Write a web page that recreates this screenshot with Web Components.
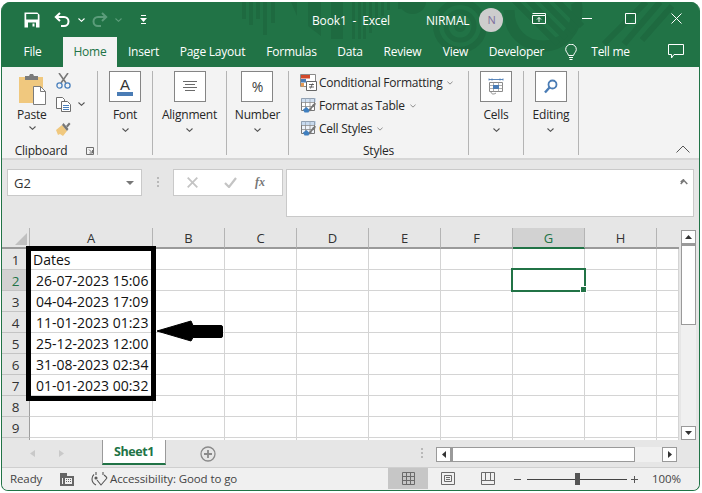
<!DOCTYPE html>
<html><head><meta charset="utf-8">
<style>
html,body{margin:0;padding:0;background:#fff;overflow:hidden}
body{font-family:"Open Sans","Noto Sans",sans-serif;width:702px;height:493px}
</style></head><body>
<xl-window>
  <xl-title></xl-title>
  <xl-tabs></xl-tabs>
  <xl-ribbon></xl-ribbon>
  <xl-formula></xl-formula>
  <xl-sheet></xl-sheet>
  <xl-sheetbar></xl-sheetbar>
  <xl-status></xl-status>
</xl-window>
<script>
const def=(name,html,init)=>customElements.define(name,class extends HTMLElement{
  constructor(){super();const r=this.attachShadow({mode:'open'});r.innerHTML=typeof html==='function'?html(this):html;}
  connectedCallback(){if(init&&!this._i){this._i=1;init(this.shadowRoot,this);}}
});
const G='#217346',FONT='"Open Sans","Noto Sans",sans-serif';
const chev=(c='#666',w=7)=>`<svg width="${w}" height="4" viewBox="0 0 7 4" fill="none"><path d="M.5.5 3.5 3.3 6.5.5" stroke="${c}" stroke-width="1.1"/></svg>`;

def('xl-window',`<style>
:host{display:flex;flex-direction:column;box-sizing:border-box;width:699px;height:489px;margin:2px 2px 0 1px;
border:1px solid ${G};border-top:0;border-radius:9px 9px 7px 7px;overflow:hidden;background:#e6e6e6;position:relative}
</style><slot></slot>`);

def('xl-title',`<style>
:host{display:flex;align-items:center;height:35px;flex:none;background:${G};color:#fff;font:12px ${FONT};position:relative;letter-spacing:-.15px}
.bg{position:absolute;left:0;top:-2px}
.i{position:relative;display:flex;flex:none}
.t{position:relative;white-space:pre;flex:none;padding-top:1px}
.av{position:relative;width:24px;height:24px;border-radius:50%;background:#cdcdcd;color:#7d6f9c;font-size:11px;display:flex;align-items:center;justify-content:center;flex:none;margin-left:10px;font-weight:400}
</style>
<svg class="bg" width="699" height="67" viewBox="0 0 699 67" fill="#1e6a40">
<path d="M0 0h699v67H0z" fill="${G}"/>
<path d="M240 2h4v17h-4zM247 2h4v23h-4zM254 2h4v17h-4zM261 2h4v33h-4zM269 2h4v21h-4zM289 2h6v14zM306 2h13v34l-13-10zM329 2h12v37h-12zM350 2h3v37h-3zM356 2h3v37h-3zM361 2h3v37h-3zM367 2h3v31h-3zM373 2h3v22h-3zM379 2h3v14h-3zM385 2h3v8h-3zM396 2h3v7h-3z"/>
<path d="M397 2h27c0 6-6 12-13.500 12S397 8 397 2z"/>
<g fill="none" stroke="#1e6a40"><circle cx="458" cy="26" r="14" stroke-width="5"/><circle cx="458" cy="26" r="4" stroke-width="4"/><circle cx="458" cy="26" r="24" stroke-width="6"/>
<path d="M507 10c0 22 15 36 34 36s34-15 34-36c0-3 0-6-1-8" stroke-width="11" stroke-linecap="butt"/></g>
<g stroke="#1e6a40" stroke-width="6"><path d="M508-4 556 44M522-4 564 38M536-4 572 32M550-4 580 26M644 2 602 44M658 2 622 44M670 6 640 40"/></g>
</svg>
<span class="i" style="margin-left:22px"><svg width="16" height="16" viewBox="0 0 16 16"><path fill="#fff" fill-rule="evenodd" d="M.5.500h12.800l2.200 2.200V15.500H.5zM2.200 2v5.500h11.600V2zM4 10.500v5h8v-5zM8.500 11.500h2v3h-2z"/></svg></span>
<span class="i" style="margin-left:14px"><svg width="16" height="15" viewBox="0 0 16 15" fill="none" stroke="#fff" stroke-width="2"><path d="M6 1 1.800 5 6 9"/><path d="M2.500 5H10a4.500 4.500 0 0 1 0 9H7"/></svg></span>
<span class="i" style="margin-left:8px">${chev('#fff')}</span>
<span class="i" style="margin-left:7px"><svg width="16" height="15" viewBox="0 0 16 15" fill="none" stroke="#5b9c7a" stroke-width="2"><path d="M10 1l4.200 4L10 9"/><path d="M13.500 5H6a4.500 4.500 0 0 0 0 9h3"/></svg></span>
<span class="i" style="margin-left:7px">${chev('#5b9c7a')}</span>
<span class="i" style="margin-left:18px"><svg width="7" height="9" viewBox="0 0 7 9" fill="#fff"><path d="M1 0h5v1H1zM0 3h7L3.500 7z"/><path d="M1 8h5v1H1z"/></svg></span>
<span class="t" style="margin-left:165px">Book1  -  Excel</span>
<span class="t" style="margin-left:36px">NIRMAL</span>
<span class="av">N</span>
<span class="i" style="margin-left:29px;margin-top:-3px"><svg width="14" height="11" viewBox="0 0 14 11" fill="none" stroke="#fff"><path d="M.5 2.500h13v8H.5z M.5.500h13v2"/><path d="M7 9V4.500M5 6.500l2-2 2 2"/></svg></span>
<span class="i" style="margin-left:36px;margin-top:-3px"><svg width="10" height="1" viewBox="0 0 10 1"><path d="M0 0h10v1H0z" fill="#fff"/></svg></span>
<span class="i" style="margin-left:33px;margin-top:-3px"><svg width="11" height="11" viewBox="0 0 11 11" fill="none" stroke="#fff"><path d="M.5.500h10v10H.5z"/></svg></span>
<span class="i" style="margin-left:35px;margin-top:-3px"><svg width="11" height="11" viewBox="0 0 11 11" fill="none" stroke="#fff"><path d="M.5.500l10 10M10.500.500l-10 10"/></svg></span>
`);

def('xl-tabs',`<style>
:host{display:flex;height:30px;flex:none;color:#fff;font:12px ${FONT};position:relative;letter-spacing:-.22px;align-items:stretch}
span{display:flex;align-items:center;justify-content:center;flex:none;padding-bottom:2px;box-sizing:border-box;position:relative}
.on{background:#f3f3f3;color:${G};padding-bottom:2px}
svg{position:relative}
</style>
<span style="width:61px">File</span><span class="on" style="width:54px">Home</span>
<span style="width:53px">Insert</span><span style="width:85px">Page Layout</span><span style="width:73px">Formulas</span>
<span style="width:44px">Data</span><span style="width:61px">Review</span><span style="width:45px">View</span><span style="width:77px">Developer</span>
<span style="width:10px"></span>
<svg style="margin-top:7px" width="12" height="17" viewBox="0 0 12 17" fill="none" stroke="#fff"><path d="M3.500 11.500C3 9 .7 8 .7 5.500a5.300 5.300 0 0 1 10.600 0C11.300 8 9 9 8.500 11.500z"/><path d="M4 13.500h4M4.500 15.500h3"/></svg>
<span style="width:14px"></span><span style="width:39px;letter-spacing:-.3px">Tell me</span>
<span style="width:38px"></span>
<svg style="margin-top:7px" width="16" height="15" viewBox="0 0 16 15" fill="none" stroke="#fff"><path d="M.5.500h15v10H6L3.500 14v-3.500H.5z"/></svg>
`);

def('xl-rgroup',`<style>
:host{display:flex;flex:none;box-sizing:border-box;height:84px;border-right:1px solid #b4b4b4;position:relative;justify-content:center;margin-right:0}
</style><slot></slot>`);

def('xl-bigbtn',(h)=>`<style>
:host{display:flex;flex-direction:column;align-items:center;font:12px ${FONT};color:#262626;letter-spacing:-.2px}
.b{box-sizing:border-box;width:32px;height:31px;border:1px solid #858585;background:#fff;display:flex;align-items:center;justify-content:center}
.l{margin-top:4px;height:17px;line-height:17px;white-space:nowrap}
.c{margin-top:5px;display:flex}
</style><div class="b"><slot></slot></div><div class="l">${h.getAttribute('label')}</div><div class="c">${chev('#555')}</div>`);

const tbl=(a,b,c)=>`<svg width="17" height="17" viewBox="0 0 17 17"><path d="M1.500 1.500h13v12h-13z" fill="${c}" stroke="#777"/><path d="M1.500 5.500h13M1.500 9.500h13M5.500 1.500v12M10 1.500v12" stroke="#8a8a8a" stroke-width=".8"/><path d="M1 1h15v4H1z" fill="${a}" opacity=".55"/><path d="M6 15l5-5 2-3 3-1-1 3-3 2-1 3z" fill="#777"/><path d="M3 12.500l3.500-2.500 3 3-1 2.500H4.500z" fill="#3f7fbf"/></svg>`;

def('xl-style-row',(h)=>`<style>
:host{display:flex;flex:none;align-items:center;height:23px;font:12px ${FONT};color:#262626;white-space:nowrap;letter-spacing:-.24px}
.t{margin-left:2px;margin-right:5px;margin-top:0}
.i{display:flex;margin-left:0}
</style><span class="i"><slot></slot></span><span class="t">${h.getAttribute('label')}</span>${chev('#888',6)}`);

def('xl-ribbon',`<style>
:host{display:flex;height:93px;flex:none;box-sizing:border-box;background:#f3f3f3;border-bottom:2px solid #d6d6d6;padding-top:4px;position:relative;font:12px ${FONT};color:#262626;letter-spacing:-.2px}
.cb{display:grid;grid-template-columns:46px 26px 14px;grid-template-rows:24px 23px 25px 12px;width:95px;box-sizing:border-box;padding-left:16px}
.paste{grid-row:1/4;display:flex;flex-direction:column;align-items:flex-start;width:30px;padding-top:3px}
.paste span{margin-top:0;margin-left:-1px;height:17px;line-height:17px}
.paste .ch{display:flex;margin-top:3px;margin-left:11px}
.gl{text-align:center}
.cell{display:flex;align-items:center}
.styles{display:flex;flex-direction:column;padding-left:11px;width:179px;box-sizing:border-box;position:relative}
.lab{height:15px;line-height:15px;text-align:center;margin:3px 0 0 -11px}
.coll{position:absolute;right:9px;bottom:5px}
</style>
<xl-rgroup style="width:96px;justify-content:flex-start">
 <div class="cb">
  <div class="paste">
   <svg width="30" height="32" viewBox="0 0 30 32"><path d="M1 3h24v26H1z" fill="#f0c87e"/><path d="M7 4V2h4l1-2h3l1 2h4v4H7z" fill="#7b7b7b"/><path d="M15.500 12.500h7l5 5v13h-12z" fill="#fff" stroke="#7b7b7b"/><path d="M22.500 12.500v5h5" fill="none" stroke="#7b7b7b"/></svg>
   <span>Paste</span>
   <div class="ch">${chev('#555')}</div>
  </div>
  <div class="cell" style="margin-left:-8px;margin-top:-5px"><svg width="15" height="16" viewBox="0 0 15 16" fill="none"><path d="M3 0l7 10M12 0 5 10" stroke="#7a7a7a" stroke-width="1.600"/><circle cx="3.500" cy="12.500" r="2.600" stroke="#4a80bd" stroke-width="1.300"/><circle cx="11.500" cy="12.500" r="2.600" stroke="#4a80bd" stroke-width="1.300"/></svg></div>
  <div></div>
  <div class="cell" style="margin-left:-8px;margin-top:-5px"><svg width="15" height="15" viewBox="0 0 15 15" fill="none" stroke="#6f6f6f"><path d="M.5.500h6l2 2v9h-8z" fill="#fff"/><path d="M5.500 4.500h6l3 3v7h-9z" fill="#fff"/><path d="M7 8.500h6M7 10.500h6M7 12.500h6" stroke="#4a80bd"/></svg></div>
  <div class="cell" style="margin-left:-12px;margin-top:-5px">${chev('#555')}</div>
  <div class="cell" style="margin-left:-9px;margin-top:-3px"><svg width="16" height="15" viewBox="0 0 16 15"><path d="M1 8 7 3l5 6-4 5-3-2-2 1z" fill="#f0c87e"/><path d="M7 3l5 6 1.500-2-5-6z" fill="#777"/><path d="M11 4l3-3.500 1.500 1.500-3 3.500z" fill="#777"/></svg></div>
  <div></div>
  <div class="gl" style="grid-column:1/3;margin-left:-16px;width:78px;height:16px;line-height:16px">Clipboard</div>
  <div class="cell" style="margin-left:-4px;margin-top:4px"><svg width="9" height="8" viewBox="0 0 9 8" fill="none" stroke="#6f6f6f"><path d="M.5 7.500v-7h7v7z"/><path d="M3 2.500l3 3M6.500 3v3H3.500"/></svg></div>
 </div>
</xl-rgroup>
<xl-rgroup style="width:55px"><xl-bigbtn label="Font"><svg width="18" height="20" viewBox="0 0 18 20"><text x="9" y="13" text-anchor="middle" font-family="Liberation Sans" font-size="15" fill="#333">A</text><path d="M1 15h16v4H1z" fill="#4a7cb5"/></svg></xl-bigbtn></xl-rgroup>
<xl-rgroup style="width:74px"><xl-bigbtn label="Alignment"><svg width="14" height="11" viewBox="0 0 14 11" stroke="#6a6a6a"><path d="M0 .5h14M2 3.500h10M0 6.500h14M2 9.500h10"/></svg></xl-bigbtn></xl-rgroup>
<xl-rgroup style="width:62px"><xl-bigbtn label="Number"><span style="font:14px 'Open Sans';color:#404040">%</span></xl-bigbtn></xl-rgroup>
<xl-rgroup style="width:180px">
 <div class="styles">
  <xl-style-row label="Conditional Formatting"><svg width="17" height="17" viewBox="0 0 17 17"><path d="M.5.500h15v12H.5z" fill="#fff" stroke="#8a8a8a"/><path d="M1 1h9v3.500H1z" fill="#d2492a"/><path d="M1 5h5v3.500H1z" fill="#4a7cb5"/><path d="M1 9h3v3.500H1z" fill="#e69b55"/><path d="M6.500 7.500h10v9h-10z" fill="#fff" stroke="#666"/><path d="M9 10.500h5M9 13h5M12.500 9.500l-2 5" stroke="#444" stroke-width=".8" fill="none"/></svg></xl-style-row>
  <xl-style-row label="Format as Table">${tbl('#a9c4e4','','#fff')}</xl-style-row>
  <xl-style-row label="Cell Styles">${tbl('#a9c4e4','','#eef3fa')}</xl-style-row>
  <div class="lab">Styles</div>
 </div>
</xl-rgroup>
<xl-rgroup style="width:55px"><xl-bigbtn label="Cells"><svg width="16" height="17" viewBox="0 0 16 17" fill="none"><path d="M1 1.500h14M1 .5v2M15 .5v2M4 .5v2M12 .5v2" stroke="#4a7cb5" stroke-width=".9"/><path d="M1.500 4.500h13v9h-13z" fill="#fff" stroke="#8a8a8a"/><path d="M1.500 7.500h13M1.500 10.500h13M5.500 4.500v9M10.500 4.500v9" stroke="#9a9a9a" stroke-width=".8"/><path d="M5 7h6v4H5z" fill="#4a7cb5"/><path d="M3 13.500c0 3 3 3 5 1.500" stroke="#8a8a8a"/></svg></xl-bigbtn></xl-rgroup>
<xl-rgroup style="width:55px"><xl-bigbtn label="Editing"><svg width="14" height="15" viewBox="0 0 14 15" fill="none" stroke="#4a7cb5"><circle cx="8.500" cy="5.500" r="4" stroke-width="1.800"/><path d="M5.500 8.500 1 13.500" stroke-width="2.400"/></svg></xl-bigbtn></xl-rgroup>
<svg class="coll" width="14" height="8" viewBox="0 0 14 8" fill="none" stroke="#555"><path d="M.5 7.500 7 1l6.500 6.500"/></svg>
`);

def('xl-formula',`<style>
:host{display:flex;height:68px;flex:none;box-sizing:border-box;background:#e6e6e6;padding:9px 5px 0 5px;align-items:flex-start;font:13px ${FONT};color:#333}
.box{box-sizing:border-box;background:#fff;border:1px solid #c9c9c9;display:flex;align-items:center;flex:none}
.name{width:135px;height:27px;padding:0 6px;justify-content:space-between;letter-spacing:.1px}
.dots{width:31px;display:flex;flex-direction:column;gap:2px;align-items:center;padding-top:8px;flex:none}
.dots i{width:2px;height:2px;background:#b9b9b9}
.btns{width:110px;height:27px;margin-right:3px}
.inp{flex:1;height:48px;position:relative;align-items:flex-start;justify-content:flex-end;padding:9px 5px}
.fx{font:italic bold 12px "Liberation Serif",serif;color:#777;position:relative}
</style>
<div class="box name"><span>G2</span><svg width="8" height="4" viewBox="0 0 8 4" style="margin-right:1px"><path d="M0 0h8L4 4z" fill="#777"/></svg></div>
<div class="dots"><i></i><i></i><i></i></div>
<div class="box btns">
 <svg style="margin-left:13px" width="11" height="11" viewBox="0 0 11 11" stroke="#c4c4c4" stroke-width="1.800" fill="none"><path d="M.7.700l9.600 9.600M10.300.700.700 10.300"/></svg>
 <svg style="margin-left:26px" width="13" height="11" viewBox="0 0 13 11" stroke="#c4c4c4" stroke-width="2.200" fill="none"><path d="M1 6l4 4 7-9"/></svg>
 <span class="fx" style="margin-left:18px">fx</span>
</div>
<div class="box inp"><svg width="8" height="6" viewBox="0 0 8 6" fill="none" stroke="#7a7a7a" stroke-width="1.500"><path d="M.7 5 4 1.500 7.300 5M.7 3 4 .2"/></svg></div>
`);

def('xl-sheet',`<style>
:host{display:flex;height:212px;flex:none;background:#e6e6e6;position:relative;font:13px ${FONT}}
.grid{display:grid;grid-template-columns:28px 123px repeat(7,72px) 22px;grid-template-rows:21px repeat(9,21px) 1fr;width:677px;height:212px;background:#fff;border-bottom:1px solid #9a9a9a;box-sizing:border-box}
.c{box-sizing:border-box;border-right:1px solid #d4d4d4;border-bottom:1px solid #d4d4d4;background:#fff;color:#111;white-space:nowrap;display:flex;align-items:center;position:relative;font-size:14px;line-height:20px;padding-top:2px}
.h{background:#e6e6e6;border-right:1px solid #b4b4b4;border-bottom:2px solid #9a9a9a;justify-content:center;color:#333;font-size:13px;padding-top:0}
.r{background:#e6e6e6;border-right:1px solid #9e9e9e;border-bottom:1px solid #c4c4c4;justify-content:center;color:#333;font-size:13.500px;padding-top:2px}
.hs{background:#d2d2d2;color:${G}}
.hg{border-bottom:2px solid ${G}}
.cor{background:#e6e6e6;border-bottom:2px solid #9a9a9a;border-right:1px solid #b4b4b4;position:relative}
.cor::after{content:"";position:absolute;right:2px;bottom:2px;border-style:solid;border-width:0 0 12px 12px;border-color:transparent transparent #c0c0c0 transparent}
.sel{position:absolute;left:-2px;top:-2px;right:-2px;bottom:-2px;border:2px solid ${G};box-sizing:border-box;z-index:3;width:75px;height:24px}
.hd{position:absolute;right:-2px;bottom:-2px;width:5px;height:5px;background:${G};outline:1px solid #fff;z-index:4}
.box{position:absolute;left:24px;top:18px;width:130px;height:155px;box-sizing:border-box;border:5px solid #000;z-index:5}
.arrow{position:absolute;left:153px;top:90px;z-index:5}
.sb{width:20px;flex:none;box-sizing:border-box;padding:2px 4px 0 2px;display:flex;flex-direction:column}
.btn{box-sizing:border-box;width:15px;height:14px;background:#fff;border:1px solid #9a9a9a;display:flex;align-items:center;justify-content:center;flex:none}
.th{box-sizing:border-box;width:15px;height:81px;background:#fff;border:1px solid #9a9a9a;border-top:2px solid #9a9a9a;flex:none}
.tr{flex:1;width:15px;background:#f0f0f0}
</style>
<div class="grid" id="g"></div>
<div class="sb">
 <div class="btn"><svg width="7" height="4" viewBox="0 0 7 4"><path d="M0 4 3.500 0 7 4z" fill="#333"/></svg></div>
 <div class="th"></div><div class="tr"></div>
 <div class="btn"><svg width="7" height="4" viewBox="0 0 7 4"><path d="M0 0h7L3.500 4z" fill="#333"/></svg></div>
</div>
<div class="box"></div>
<svg class="arrow" width="72" height="28" viewBox="0 0 72 28"><path d="M2 13 36 3 38 7.500H66Q67.500 7.500 67.500 9V18Q67.500 19.500 66 19.500H38L36 23z" fill="#000" stroke="#000" stroke-linejoin="round"/></svg>
`,(r)=>{
 const g=r.getElementById('g');
 const vals=['Dates','26-07-2023 15:06','04-04-2023 17:09','11-01-2023 01:23','25-12-2023 12:00','31-08-2023 02:34','01-01-2023 00:32'];
 let s='<div class="cor"></div>';
 'ABCDEFGH'.split('').forEach(c=>{s+=`<div class="c h${c==='G'?' hs hg':''}">${c}</div>`});
 s+='<div class="c h" style="border-right:0;background:#e6e6e6"></div>';
 for(let i=1;i<=9;i++){
  s+=`<div class="c r${i===2?' hs':''}">${i}</div>`;
  for(let c=0;c<9;c++){
   let inner='',st='';
   if(c===0&&vals[i-1]){inner=vals[i-1];st=`padding-left:${i===1?3:6}px`;}
   if(c===6&&i===2)inner='<div class="sel"></div><div class="hd"></div>';
   s+=`<div class="c" style="${st}">${inner}</div>`;
  }
 }
 s+='<div class="c r" style="border-bottom:0"></div>';
 for(let c=0;c<9;c++)s+='<div class="c" style="border-bottom:0"></div>';
 g.innerHTML=s;
});

def('xl-sheetbar',`<style>
:host{display:flex;height:28px;flex:none;box-sizing:border-box;background:#e6e6e6;align-items:flex-start;font:bold 13px ${FONT};border-bottom:1px solid #cfcfcf;position:relative}
.nav{display:flex;margin-top:10px}
.tab{box-sizing:border-box;width:64px;height:25px;background:#fff;color:${G};border-left:1px solid #9a9a9a;border-right:1px solid #9a9a9a;border-bottom:2px solid ${G};margin-left:38px;display:flex;align-items:center;justify-content:center;letter-spacing:-.4px;flex:none;font-size:12.500px;font-weight:700}
.plus{margin-left:34px;margin-top:6px;display:flex}
.dots{width:2px;margin-left:205px;margin-top:8px;display:flex;flex-direction:column;gap:2px;flex:none}
.dots i{width:2px;height:2px;background:#b9b9b9;display:block}
.hs{display:flex;margin-left:13px;margin-top:7px;height:15px;width:241px;flex:none}
.btn{box-sizing:border-box;width:15px;height:15px;background:#fff;border:1px solid #9a9a9a;display:flex;align-items:center;justify-content:center;flex:none}
.th{box-sizing:border-box;width:184px;background:#fff;border:1px solid #9a9a9a;border-left:2px solid #9a9a9a;flex:none}
.tr{flex:1;background:#f0f0f0}
</style>
<div class="nav" style="margin-left:28px"><svg width="5" height="7" viewBox="0 0 5 7"><path d="M5 0v7L0 3.500z" fill="#c9c9c9"/></svg><svg style="margin-left:24px" width="5" height="7" viewBox="0 0 5 7"><path d="M0 0v7l5-3.500z" fill="#c9c9c9"/></svg></div>
<div class="tab">Sheet1</div>
<div class="plus"><svg width="16" height="16" viewBox="0 0 16 16" fill="none" stroke="#8a8a8a"><circle cx="8" cy="8" r="7" stroke-width="1.300"/><path d="M4 8h8M8 4v8" stroke-width="1.800"/></svg></div>
<div class="dots"><i></i><i></i><i></i></div>
<div class="hs"><div class="btn"><svg width="4" height="7" viewBox="0 0 4 7"><path d="M4 0v7L0 3.500z" fill="#333"/></svg></div><div class="th"></div><div class="tr"></div><div class="btn"><svg width="4" height="7" viewBox="0 0 4 7"><path d="M0 0v7l4-3.500z" fill="#333"/></svg></div></div>
`);

def('xl-status',`<style>
:host{display:flex;flex:1;align-items:center;background:#f0f0f0;font:11.500px ${FONT};color:#444;position:relative;letter-spacing:-.1px}
span,svg,div{flex:none}
span{margin-top:-1px}
.v{width:40px;height:21px;display:flex;align-items:center;justify-content:center;align-self:flex-start}
</style>
<span style="margin-left:8px;width:41px">Ready</span>
<svg style="margin-left:9px" width="14" height="13" viewBox="0 0 14 13"><path d="M0 0h7v3h7v10H0z" fill="#666"/><path d="M5 5h7v6H5z" fill="#f0f0f0"/><path d="M6 6h1v1H6zM8 6h1v1H8zM10 6h1v1h-1zM6 8h1v1H6zM8 8h1v1H8zM10 8h1v1h-1z" fill="#666"/><path d="M2 5h1v6H2z" fill="#f0f0f0"/></svg>
<svg style="margin-left:17px" width="17" height="15" viewBox="0 0 17 15" fill="none" stroke="#555" stroke-width="1.100"><path d="M5 0v3M12 0v3M3 2.500A6 6 0 0 0 1 7c0 3 2 5 4 6M13 3c1.500 1 2.500 2 3 3"/><path d="M6 8l4 5 6-7"/><circle cx="5" cy="6" r="1" fill="#555"/></svg>
<span style="margin-left:2px;width:278px">Accessibility: Good to go</span>
<div class="v" style="background:#c6c6c6"><svg width="13" height="13" viewBox="0 0 13 13" fill="none" stroke="#6a6a6a"><path d="M.5.500h12v12H.5zM4.500.500v12M8.500.500v12M.5 4.500h12M.5 8.500h12"/></svg></div>
<div class="v"><svg width="14" height="13" viewBox="0 0 14 13" fill="none" stroke="#6a6a6a"><path d="M.5.500h13v12H.5z"/><path d="M3.500 3.500h7v6h-7zM5 5.500h4M5 7.500h4"/></svg></div>
<div class="v"><svg width="14" height="13" viewBox="0 0 14 13" fill="none" stroke="#6a6a6a"><path d="M.5.500h13v12H.5zM.5 8.500h13M4.500.500v8M9.500.500v8"/></svg></div>
<svg style="margin-left:6px" width="7" height="1" viewBox="0 0 7 1"><path d="M0 0h7v1H0z" fill="#555"/></svg>
<div style="margin-left:6px;width:100px;height:1px;background:#444;position:relative"><div style="position:absolute;left:48px;top:-6px;width:5px;height:12px;background:#555"></div></div>
<svg style="margin-left:4px" width="7" height="7" viewBox="0 0 7 7"><path d="M0 3h7v1H0zM3 0h1v7H3z" fill="#555"/></svg>
<span style="margin-left:14px">100%</span>
`);
</script></body></html>
